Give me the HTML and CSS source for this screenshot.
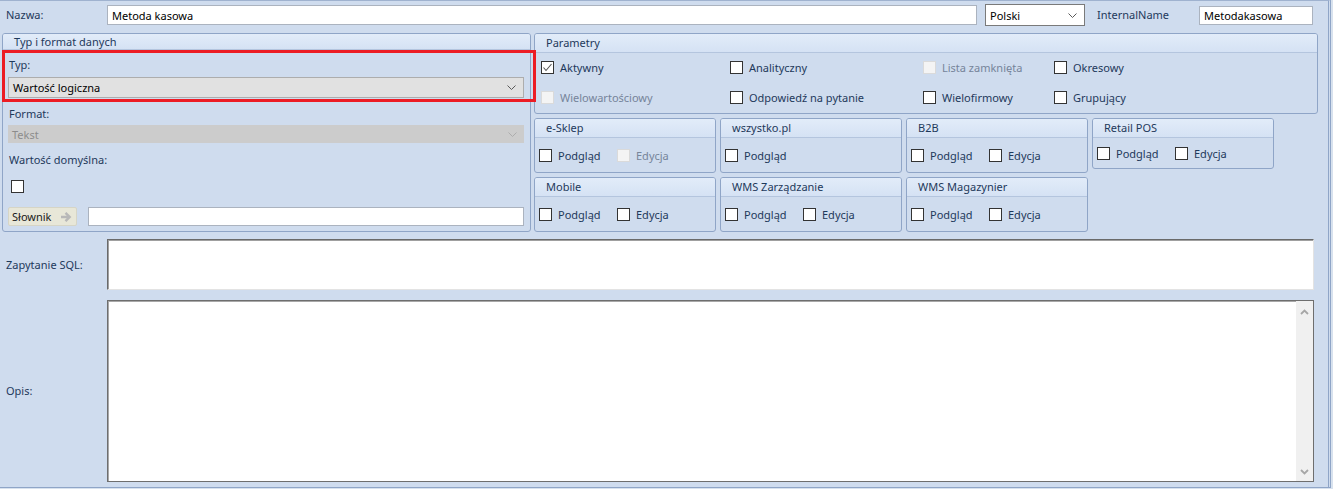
FILE: index.html
```html
<!DOCTYPE html>
<html lang="pl">
<head>
    <meta charset="UTF-8">
    <meta name="viewport" content="width=device-width, initial-scale=1.0">
    <title>Atrybut</title>
    <link rel="stylesheet" href="styles.css">
</head>
<body>
    <div class="frame">
        <div class="name-row">
            <span class="field-label">Nazwa:</span>
            <input class="text-input name-input" value="Metoda kasowa">
            <div class="select lang-select">
                <span>Polski</span>
                <svg class="chev" width="9" height="5" viewBox="0 0 9 5"><path d="M0.5 0.5 L4.5 4.5 L8.5 0.5" fill="none" stroke="#5a5a5a"/></svg>
            </div>
            <span class="field-label internal-label">InternalName</span>
            <input class="text-input internal-input" value="Metodakasowa">
        </div>

        <div class="main-row">
            <section class="group type-group">
                <div class="group-title">Typ i format danych</div>
                <div class="type-body">
                    <span class="caption">Typ:</span>
                    <div class="select type-select">
                        <span>Wartość logiczna</span>
                        <svg class="chev" width="9" height="5" viewBox="0 0 9 5"><path d="M0.5 0.5 L4.5 4.5 L8.5 0.5" fill="none" stroke="#5a5a5a"/></svg>
                    </div>
                    <span class="caption caption-format">Format:</span>
                    <div class="select format-select">
                        <span>Tekst</span>
                        <svg class="chev" width="9" height="5" viewBox="0 0 9 5"><path d="M0.5 0.5 L4.5 4.5 L8.5 0.5" fill="none" stroke="#adadad"/></svg>
                    </div>
                    <span class="caption caption-default">Wartość domyślna:</span>
                    <span class="cb default-cb"></span>
                    <div class="dict-row">
                        <div class="dict-btn">
                            <span>Słownik</span>
                            <svg width="13" height="12" viewBox="0 0 13 12"><path d="M1 6h8.5M5.5 1.8L9.7 6 5.5 10.2" fill="none" stroke="#b8b8b8" stroke-width="2.4"/></svg>
                        </div>
                        <input class="text-input dict-input" value="">
                    </div>
                </div>
                <div class="highlight"></div>
            </section>

            <div class="side">
                <section class="group params">
                    <div class="group-title">Parametry</div>
                    <div class="params-grid">
                        <label class="opt"><span class="cb"><svg width="11" height="11" viewBox="0 0 11 11"><path d="M1.5 5.5 L4 8.5 L9.5 2" fill="none" stroke="#555" stroke-width="1.1"/></svg></span>Aktywny</label>
                        <label class="opt"><span class="cb"></span>Analityczny</label>
                        <label class="opt disabled"><span class="cb"></span>Lista zamknięta</label>
                        <label class="opt"><span class="cb"></span>Okresowy</label>
                        <label class="opt disabled"><span class="cb"></span>Wielowartościowy</label>
                        <label class="opt"><span class="cb"></span>Odpowiedź na pytanie</label>
                        <label class="opt"><span class="cb"></span>Wielofirmowy</label>
                        <label class="opt"><span class="cb"></span>Grupujący</label>
                    </div>
                </section>

                <div class="modules">
                    <section class="group module">
                        <div class="group-title">e-Sklep</div>
                        <div class="module-body">
                            <label class="opt"><span class="cb"></span>Podgląd</label>
                            <label class="opt disabled"><span class="cb"></span>Edycja</label>
                        </div>
                    </section>
                    <section class="group module">
                        <div class="group-title">wszystko.pl</div>
                        <div class="module-body">
                            <label class="opt"><span class="cb"></span>Podgląd</label>
                        </div>
                    </section>
                    <section class="group module">
                        <div class="group-title">B2B</div>
                        <div class="module-body">
                            <label class="opt"><span class="cb"></span>Podgląd</label>
                            <label class="opt"><span class="cb"></span>Edycja</label>
                        </div>
                    </section>
                    <section class="group module compact">
                        <div class="group-title">Retail POS</div>
                        <div class="module-body">
                            <label class="opt"><span class="cb"></span>Podgląd</label>
                            <label class="opt"><span class="cb"></span>Edycja</label>
                        </div>
                    </section>
                    <section class="group module">
                        <div class="group-title">Mobile</div>
                        <div class="module-body">
                            <label class="opt"><span class="cb"></span>Podgląd</label>
                            <label class="opt"><span class="cb"></span>Edycja</label>
                        </div>
                    </section>
                    <section class="group module">
                        <div class="group-title">WMS Zarządzanie</div>
                        <div class="module-body">
                            <label class="opt"><span class="cb"></span>Podgląd</label>
                            <label class="opt"><span class="cb"></span>Edycja</label>
                        </div>
                    </section>
                    <section class="group module">
                        <div class="group-title">WMS Magazynier</div>
                        <div class="module-body">
                            <label class="opt"><span class="cb"></span>Podgląd</label>
                            <label class="opt"><span class="cb"></span>Edycja</label>
                        </div>
                    </section>
                </div>
            </div>
        </div>

        <div class="area-row sql-row">
            <span class="field-label">Zapytanie SQL:</span>
            <div class="sql-box"></div>
        </div>

        <div class="area-row desc-row">
            <span class="field-label">Opis:</span>
            <div class="desc-box">
                <div class="scrollbar">
                    <svg width="9" height="6" viewBox="0 0 9 6"><path d="M1 5 L4.5 1.5 L8 5" fill="none" stroke="#a6a6a6" stroke-width="1.8"/></svg>
                    <svg width="9" height="6" viewBox="0 0 9 6"><path d="M1 1 L4.5 4.5 L8 1" fill="none" stroke="#a6a6a6" stroke-width="1.8"/></svg>
                </div>
            </div>
        </div>
    </div>
</body>
</html>
```

FILE: styles.css
```css
* {
    box-sizing: border-box;
}

body {
    margin: 0;
    background-color: #d8e2ee;
    font-family: 'Noto Sans', 'Open Sans', sans-serif;
    font-size: 11px;
    color: #1e395b;
}

.frame {
    width: 1331px;
    background-color: #cfdcee;
    border-top: 1px solid #9fb2cf;
    border-right: 3px double #8fa5c7;
    border-bottom: 1px solid #8fa5c7;
    padding-bottom: 5px;
}

.field-label {
    width: 101px;
    flex-shrink: 0;
    line-height: 16px;
}

.text-input {
    height: 20px;
    border: 1px solid #abb3bf;
    background: white;
    font: inherit;
    color: black;
    padding: 0 4px;
    outline: none;
}

.select {
    display: flex;
    align-items: center;
    justify-content: space-between;
    padding: 0 7px 0 4px;
    color: black;
}

.chev {
    flex-shrink: 0;
}

/* top row */
.name-row {
    display: flex;
    align-items: center;
    height: 22px;
    margin-top: 3px;
    padding: 0 15px 0 6px;
}

.name-input {
    flex: 1;
    min-width: 0;
}

.lang-select {
    width: 100px;
    height: 22px;
    margin-left: 8px;
    background: white;
    border: 1px solid #7a7a7a;
}

.internal-label {
    width: 102px;
    margin-left: 12px;
}

.internal-input {
    width: 114px;
    height: 19px;
}

/* group boxes */
.main-row {
    display: flex;
    align-items: flex-start;
    gap: 3px;
    margin-top: 7px;
    padding-left: 2px;
}

.group {
    border: 1px solid #8fa5c7;
    border-radius: 3px;
}

.group-title {
    height: 19px;
    line-height: 18px;
    padding-left: 11px;
    background: linear-gradient(#e2ecf9, #d5e2f4);
    border-bottom: 1px solid #b4c5de;
    border-radius: 2px 2px 0 0;
}

.type-group {
    position: relative;
    width: 529px;
}

.type-group .group-title {
    height: 16px;
    line-height: 15px;
}

.type-body {
    display: flex;
    flex-direction: column;
    align-items: flex-start;
    padding: 7px 6px 5px 5px;
}

.caption {
    line-height: 16px;
    margin-left: 1px;
}

.type-select {
    align-self: stretch;
    height: 21px;
    margin-top: 4px;
    background: #e1e1e1;
    border: 1px solid #adadad;
}

.caption-format {
    margin-top: 8px;
}

.format-select {
    align-self: stretch;
    height: 18px;
    margin-top: 3px;
    background: #cccccc;
    color: #8c8c8c;
}

.caption-default {
    margin-top: 9px;
}

.default-cb {
    margin: 12px 0 0 3px;
}

.dict-row {
    display: flex;
    gap: 11px;
    align-self: stretch;
    margin-top: 14px;
}

.dict-btn {
    display: flex;
    align-items: center;
    justify-content: space-between;
    width: 69px;
    height: 19px;
    padding: 0 3px 0 3px;
    background: #e8e7d8;
    border: 1px solid #d6d5c6;
    border-radius: 2px;
    color: #1a1a1a;
}

.dict-input {
    flex: 1;
    height: 19px;
}

.highlight {
    position: absolute;
    left: -1px;
    top: 16px;
    width: 534px;
    height: 52px;
    border: 3px solid #ec1c24;
}

/* checkboxes */
.cb {
    display: inline-flex;
    align-items: center;
    justify-content: center;
    width: 13px;
    height: 13px;
    border: 1px solid #333;
    background: white;
    flex-shrink: 0;
}

.opt {
    display: flex;
    align-items: center;
    gap: 6px;
    white-space: nowrap;
}

.opt.disabled {
    color: #76849a;
}

.opt.disabled .cb {
    border-color: #dadada;
    background: #f4f4f4;
}

.side {
    display: flex;
    flex-direction: column;
    gap: 4px;
}

.params {
    width: 784px;
}

.params-grid {
    display: grid;
    grid-template-columns: 189px 193px 131px 1fr;
    grid-auto-rows: 30px;
    padding: 0 0 0 6px;
    margin-top: -1px;
    margin-bottom: 1px;
}

.modules {
    display: grid;
    grid-template-columns: repeat(4, 182px);
    gap: 4px;
    align-items: start;
}

.module-body {
    display: flex;
    align-items: center;
    height: 34px;
    padding-left: 4px;
}

.module .opt:first-child {
    width: 78px;
}

.module.compact .module-body {
    height: 30px;
}

/* text areas */
.area-row {
    display: flex;
    align-items: center;
    padding-left: 6px;
}

.sql-row {
    margin-top: 7px;
}

.sql-box {
    width: 1207px;
    height: 51px;
    background: white;
    border: 1px solid;
    border-color: #6a6a6a #e3e3e3 #e3e3e3 #6a6a6a;
    box-shadow: inset 1px 1px 0 #a0a0a0;
}

.desc-row {
    margin-top: 10px;
}

.desc-box {
    display: flex;
    justify-content: flex-end;
    width: 1207px;
    height: 182px;
    background: white;
    border: 1px solid #6e6e6e;
    box-shadow: inset 1px 1px 0 #a8a8a8;
}

.scrollbar {
    display: flex;
    flex-direction: column;
    justify-content: space-between;
    align-items: center;
    width: 17px;
    padding: 8px 0 6px;
    background: #f0f0f0;
}
```
